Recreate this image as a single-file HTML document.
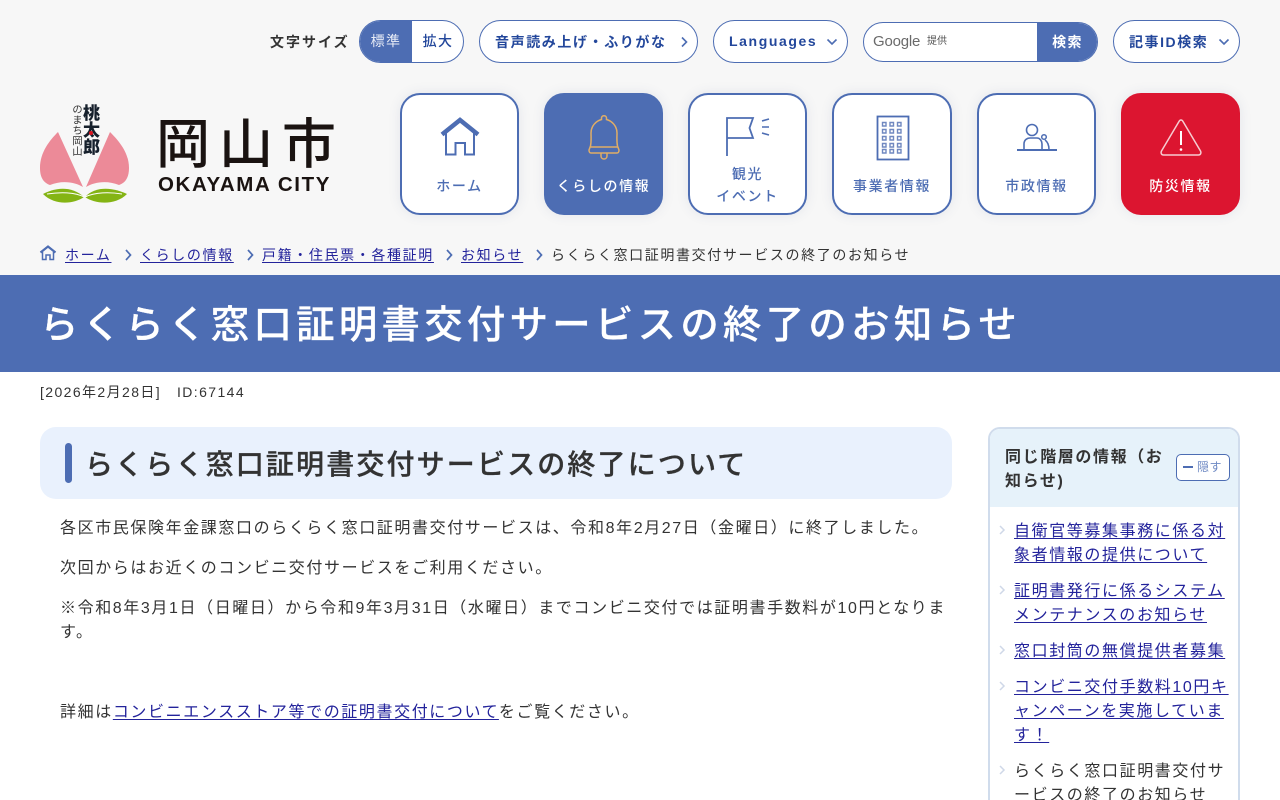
<!DOCTYPE html>
<html lang="ja"><head><meta charset="utf-8"><title>らくらく窓口証明書交付サービスの終了のお知らせ</title>
<style>
*{box-sizing:border-box;margin:0;padding:0}
html,body{width:1280px;height:800px;overflow:hidden;background:#fff}
body{position:relative;font-family:"Liberation Sans","Noto Sans CJK JP",sans-serif;color:#333}
.a{position:absolute;white-space:nowrap}
#hd{position:absolute;left:0;top:0;width:1280px;height:275px;background:#f7f7f7}
.pill{position:absolute;background:#fff;border:1px solid #4d6db3;border-radius:22px;color:#23479b;font-weight:700;font-size:14px;letter-spacing:1.6px;line-height:43px;height:43px;top:20px}
.nav{position:absolute;top:93px;width:119px;height:122px;border-radius:20px;background:#fff;border:2px solid #4d6db3;box-shadow:0 0 12px rgba(60,80,130,.1);color:#4d6db3;font-size:14px;font-weight:500;letter-spacing:1.6px;text-align:center;line-height:22px}
.nav span{position:absolute;left:-2px;width:119px;text-align:center}
.nav svg{position:absolute;left:-2px;top:-2px}
.on{background:#4d6db3;color:#fff}
.red{background:#dc1530;border-color:#dc1530;color:#fff}
.bc{position:absolute;top:245px;font-size:14px;letter-spacing:1.63px;line-height:20px;color:#333}
.bc u,.l{color:#23239b;text-decoration:underline;text-underline-offset:2px}
.p{position:absolute;left:60px;font-size:16px;letter-spacing:1.6px;line-height:24px;color:#333;white-space:nowrap}
.s{position:absolute;left:1014px;font-size:16px;letter-spacing:1.6px;line-height:24px;white-space:nowrap}
.chev{position:absolute}
</style></head><body>
<div id="hd"></div>

<div class="a" style="left:270px;top:32px;font-size:14px;font-weight:700;letter-spacing:2px;line-height:20px;color:#333">文字サイズ</div>
<div class="a" style="left:359px;top:20px;width:105px;height:43px;border:1px solid #4d6db3;border-radius:22px;background:#fff;overflow:hidden">
  <div class="a" style="left:0;top:0;width:52px;height:41px;background:#4d6db3;color:#e8ecf6;font-size:14px;letter-spacing:1.4px;line-height:41px;text-align:center">標準</div>
  <div class="a" style="left:52px;top:0;width:52px;height:41px;color:#23479b;font-size:14px;font-weight:500;letter-spacing:1.4px;line-height:41px;text-align:center">拡大</div>
</div>
<div class="pill" style="left:479px;width:219px;padding-left:15px">音声読み上げ・ふりがな<svg class="chev" style="left:200px;top:15px" width="10" height="12"><path d="M2 1.500 6.500 6 2 10.500" fill="none" stroke="#4d6db3" stroke-width="1.600"/></svg></div>
<div class="pill" style="left:713px;width:135px;padding-left:15px;letter-spacing:1.600px;line-height:41px">Languages<svg class="chev" style="left:112px;top:16px" width="12" height="10"><path d="M1.500 2.500 6 7l4.500-4.500" fill="none" stroke="#4d6db3" stroke-width="1.600"/></svg></div>
<div class="a" style="left:863px;top:22px;width:235px;height:40px;border:1px solid #4d6db3;border-radius:20px;background:#fff;overflow:hidden">
  <div class="a" style="left:9px;top:8px;font-size:15px;line-height:22px;color:#6a6a6a;letter-spacing:-.2px">Google</div>
  <div class="a" style="left:63px;top:11px;font-size:10px;line-height:16px;color:#555">提供</div>
  <div class="a" style="left:173px;top:0;width:61px;height:38px;background:#4d6db3;color:#fff;font-size:14px;font-weight:700;letter-spacing:1.400px;line-height:38px;text-align:center">検索</div>
</div>
<div class="pill" style="left:1113px;width:127px;padding-left:15px;letter-spacing:1.550px">記事ID検索<svg class="chev" style="left:104px;top:16px" width="12" height="10"><path d="M1.500 2.500 6 7l4.500-4.500" fill="none" stroke="#4d6db3" stroke-width="1.600"/></svg></div>

<!-- logo -->
<svg class="a" style="left:0;top:0" width="140" height="210">
  <path d="M58 132C50 140 40 152 40 168C40 178 44 183 50 185C62 180 75 182 83 187Z" fill="#ec8a98"/>
  <path d="M110 132C118 140 129 152 129 168C129 178 125 183 119 185C107 180 94 182 86 187Z" fill="#ec8a98"/>
  <path d="M43 194C52 189 70 184 84 197C74 204 55 206 43 194Z" fill="#84b414"/>
  <path d="M85 197C97 184 117 189 127 194C115 206 95 204 85 197Z" fill="#84b414"/>
  <path d="M47 194C60 192 75 192 84 197M85 197C95 192 110 192 122 194" fill="none" stroke="#fff" stroke-width="1"/>
</svg>
<div class="a" style="left:69px;top:104px;writing-mode:vertical-rl;font-size:10.400px;line-height:12px;color:#333">のまち岡山</div>
<div class="a" style="left:83px;top:104px;writing-mode:vertical-rl;font-size:17px;font-weight:900;line-height:17px;color:#16202c;font-family:'Noto Sans CJK JP',sans-serif">桃太郎</div>
<div class="a" style="left:88.500px;top:131px;width:4px;height:4px;border-radius:50%;background:#d8141f"></div>
<div class="a" style="left:156px;top:105px;font-size:54px;font-weight:500;line-height:70px;letter-spacing:9px;color:#1a1311;font-family:'Noto Sans CJK JP',sans-serif">岡山市</div>
<div class="a" style="left:158px;top:173px;font-size:20.500px;font-weight:700;line-height:24px;letter-spacing:1.600px;color:#1a1311">OKAYAMA CITY</div>

<!-- nav -->
<div class="nav" style="left:400px"><svg width="119" height="122" fill="none" stroke="#4d6db3"><path d="M42 41.500 60 27l18 14.500" stroke-width="4.500"/><path d="M46 40v21.500h9.500V50h9.500v11.500H74V40" stroke-width="2"/></svg><span style="top:80px">ホーム</span></div>
<div class="nav on" style="left:544px;border-color:#4d6db3"><svg width="119" height="122" fill="none" stroke="#e0ad66" stroke-width="1.500"><path d="M46.500 53C47.500 48 47 44 47 40C47 33 52 28 57.500 26.500V25C57.500 22 62.500 22 62.500 25V26.500C68 28 73 33 73 40C73 44 72.500 48 73.500 53L75 57C75 59 74 60 73 60H47C46 60 45 59 45 57ZM46 54H74M57 60V63C57 67 63 67 63 63V60"/></svg><span style="top:80px">くらしの情報</span></div>
<div class="nav" style="left:688px"><svg width="119" height="122" fill="none" stroke="#4d6db3"><path d="M39 63V25H65l-3.500 10 3.500 10H39" stroke-width="1.800"/><path d="M74 28l7-2M74 34h7M74 40l7 2" stroke-width="1.600"/></svg><span style="top:68px">観光</span><span style="top:90px">イベント</span></div>
<div class="nav" style="left:832px;width:120px"><svg width="120" height="122" fill="none" stroke="#4d6db3"><rect x="45.500" y="23.500" width="31" height="43" stroke-width="1.800"/><g stroke="#7088c0" stroke-width="1.400"><path d="M50.500 29.500h3.500v3.500h-3.500zM58 29.500h3.500v3.500H58zM65.500 29.500H69v3.500h-3.500zM50.500 36.500h3.500v3.500h-3.500zM58 36.500h3.500v3.500H58zM65.500 36.500H69v3.500h-3.500zM50.500 43.500h3.500v3.500h-3.500zM58 43.500h3.500v3.500H58zM65.500 43.500H69v3.500h-3.500zM50.500 50.500h3.500v3.500h-3.500zM58 50.500h3.500v3.500H58zM65.500 50.500H69v3.500h-3.500zM50.500 56.500h3.500v3.500h-3.500zM58 56.500h3.500v3.500H58zM65.500 56.500H69v3.500h-3.500z"/></g></svg><span style="top:80px;width:120px">事業者情報</span></div>
<div class="nav" style="left:977px"><svg width="119" height="122" fill="none" stroke="#4d6db3"><path d="M40 57h40" stroke-width="2"/><circle cx="55" cy="37" r="5.500" stroke-width="1.600"/><path d="M47 57V51C47 47 50 45 53 45H60C63 45 65 48 65 51V57" stroke-width="1.600"/><path d="M68 47C71 49 72 52 72 57" stroke-width="1.600"/><circle cx="67" cy="44" r="2.300" stroke-width="1.500"/></svg><span style="top:80px">市政情報</span></div>
<div class="nav red" style="left:1121px"><svg width="119" height="122" fill="none" stroke="#f6ccd1" stroke-width="1.500"><path d="M60 27c-1 0-1.500.5-2 1.500L40.500 58c-1 2 0 4 2 4h35c2 0 3-2 2-4L62 28.500c-.5-1-1-1.500-2-1.500z"/><path d="M60 38V52" stroke-width="2" stroke="#fff"/><circle cx="60" cy="56.500" r="1.300" fill="#fff" stroke="none"/></svg><span style="top:80px">防災情報</span></div>

<!-- breadcrumb -->
<svg class="a" style="left:39px;top:245px" width="18" height="18" fill="none" stroke="#4d6db3"><path d="M1.500 7.500 9 1.500l7.500 6" stroke-width="2.200"/><path d="M3.500 7v7.500H7V10h4v4.500h3.500V7" stroke-width="1.500"/></svg>
<div class="bc" style="left:65px"><u>ホーム</u></div>
<div class="bc" style="left:140px"><u>くらしの情報</u></div>
<div class="bc" style="left:262px"><u>戸籍・住民票・各種証明</u></div>
<div class="bc" style="left:461px"><u>お知らせ</u></div>
<div class="bc" style="left:551px">らくらく窓口証明書交付サービスの終了のお知らせ</div>
<svg class="a" style="left:124px;top:249px" width="9" height="12"><path d="M2 1 6.500 6 2 11" fill="none" stroke="#4d6db3" stroke-width="1.700"/></svg>
<svg class="a" style="left:246px;top:249px" width="9" height="12"><path d="M2 1 6.500 6 2 11" fill="none" stroke="#4d6db3" stroke-width="1.700"/></svg>
<svg class="a" style="left:445px;top:249px" width="9" height="12"><path d="M2 1 6.500 6 2 11" fill="none" stroke="#4d6db3" stroke-width="1.700"/></svg>
<svg class="a" style="left:535px;top:249px" width="9" height="12"><path d="M2 1 6.500 6 2 11" fill="none" stroke="#4d6db3" stroke-width="1.700"/></svg>

<!-- title -->
<div class="a" style="left:0;top:275px;width:1280px;height:97px;background:#4d6db3"></div>
<div class="a" style="left:40px;top:298px;font-size:38.400px;font-weight:500;-webkit-text-stroke:.3px #fff;line-height:56px;letter-spacing:4.300px;color:#fff">らくらく窓口証明書交付サービスの終了のお知らせ</div>

<div class="a" style="left:40px;top:382px;font-size:14px;letter-spacing:1.400px;line-height:20px;color:#333">[2026年2月28日]</div>
<div class="a" style="left:177px;top:382px;font-size:14px;letter-spacing:1.400px;line-height:20px;color:#333">ID:67144</div>

<!-- main -->
<div class="a" style="left:40px;top:427px;width:912px;height:72px;background:#e9f1fd;border-radius:16px"></div>
<div class="a" style="left:65px;top:443px;width:7px;height:40px;background:#4d6db3;border-radius:4px"></div>
<div class="a" style="left:85px;top:444px;font-size:28px;font-weight:500;-webkit-text-stroke:.3px #333;line-height:42px;letter-spacing:2.150px;color:#333">らくらく窓口証明書交付サービスの終了について</div>

<div class="p" style="top:517px">各区市民保険年金課窓口のらくらく窓口証明書交付サービスは、令和8年2月27日（金曜日）に終了しました。</div>
<div class="p" style="top:557px">次回からはお近くのコンビニ交付サービスをご利用ください。</div>
<div class="p" style="top:597px">※令和8年3月1日（日曜日）から令和9年3月31日（水曜日）までコンビニ交付では証明書手数料が10円となりま</div>
<div class="p" style="top:621px">す。</div>
<div class="p" style="top:701px">詳細は<span class="l">コンビニエンスストア等での証明書交付について</span>をご覧ください。</div>

<!-- side -->
<div class="a" style="left:988px;top:427px;width:252px;height:400px;border:2px solid #d0dcec;border-radius:12px 12px 0 0;background:#fff;overflow:hidden">
  <div class="a" style="left:0;top:0;width:248px;height:78px;background:#e6f2fa"></div>
</div>
<div class="a" style="left:1005px;top:446px;font-size:16px;font-weight:700;letter-spacing:1.600px;line-height:24px;color:#333">同じ階層の情報（お<br>知らせ)</div>
<div class="a" style="left:1176px;top:454px;width:54px;height:27px;border:1px solid #4d6db3;border-radius:5px;background:#fff">
  <div class="a" style="left:6px;top:11px;width:10px;height:2px;background:#4d6db3"></div>
  <div class="a" style="left:20px;top:4px;font-size:12px;line-height:17px;color:#6f8ac4;letter-spacing:.5px">隠す</div>
</div>
<div class="s l" style="top:520px">自衛官等募集事務に係る対</div>
<div class="s l" style="top:544px">象者情報の提供について</div>
<div class="s l" style="top:580px">証明書発行に係るシステム</div>
<div class="s l" style="top:604px">メンテナンスのお知らせ</div>
<div class="s l" style="top:640px">窓口封筒の無償提供者募集</div>
<div class="s l" style="top:676px">コンビニ交付手数料10円キ</div>
<div class="s l" style="top:700px">ャンペーンを実施していま</div>
<div class="s l" style="top:724px">す！</div>
<div class="s" style="top:760px;color:#333">らくらく窓口証明書交付サ</div>
<div class="s" style="top:784px;color:#333">ービスの終了のお知らせ</div>
<svg class="a" style="left:998px;top:525px" width="8" height="10"><path d="M2 1 6 5 2 9" fill="none" stroke="#cfd8e8" stroke-width="1.500"/></svg>
<svg class="a" style="left:998px;top:585px" width="8" height="10"><path d="M2 1 6 5 2 9" fill="none" stroke="#cfd8e8" stroke-width="1.500"/></svg>
<svg class="a" style="left:998px;top:645px" width="8" height="10"><path d="M2 1 6 5 2 9" fill="none" stroke="#cfd8e8" stroke-width="1.500"/></svg>
<svg class="a" style="left:998px;top:681px" width="8" height="10"><path d="M2 1 6 5 2 9" fill="none" stroke="#cfd8e8" stroke-width="1.500"/></svg>
<svg class="a" style="left:998px;top:765px" width="8" height="10"><path d="M2 1 6 5 2 9" fill="none" stroke="#cfd8e8" stroke-width="1.500"/></svg>
</body></html>
